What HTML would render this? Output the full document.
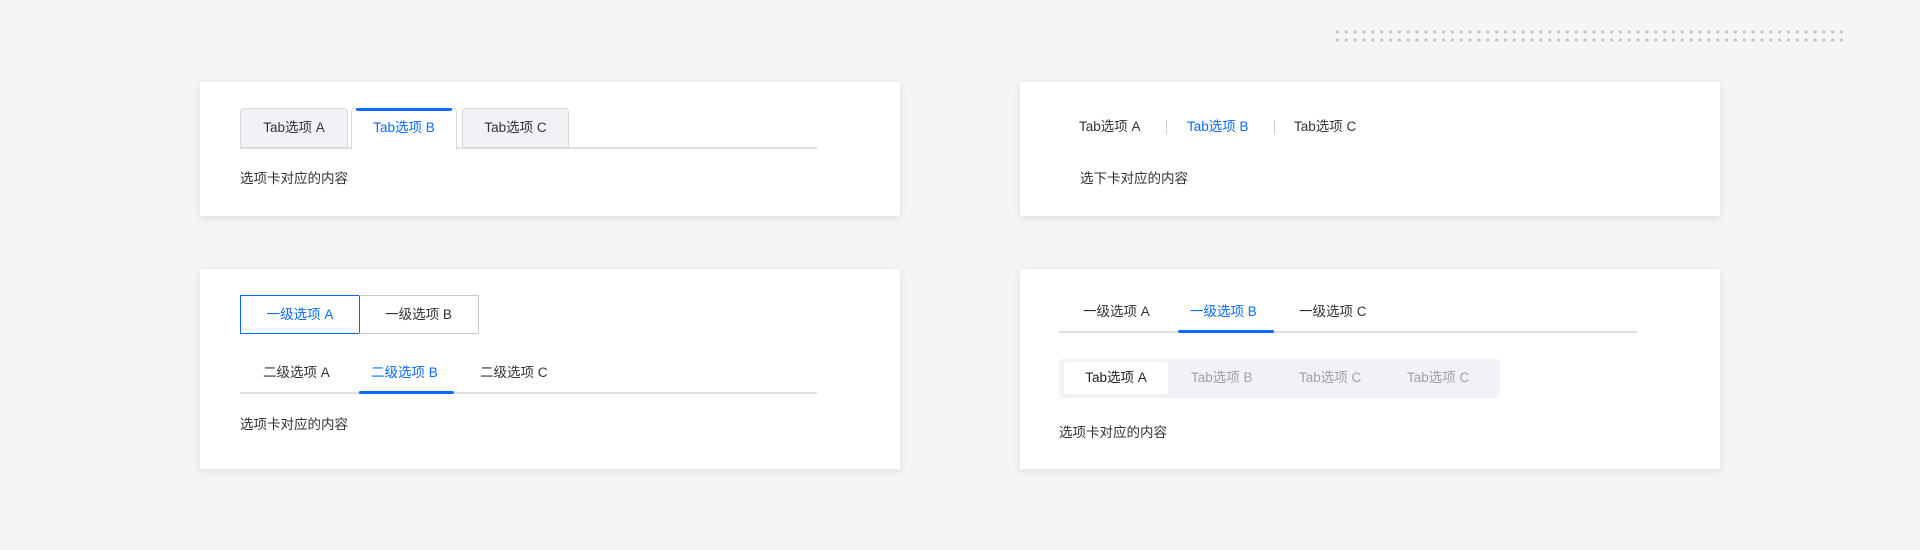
<!DOCTYPE html>
<html><head><meta charset="utf-8"><style>
*{margin:0;padding:0;box-sizing:border-box}
body{width:1920px;height:550px;background:#f5f5f5;position:relative;overflow:hidden;font-family:"Liberation Sans","Noto Sans CJK SC",sans-serif;font-size:13.5px;color:#333}
.card{position:absolute;background:#fff;box-shadow:0 2px 8px rgba(0,0,0,.1)}
.a{position:absolute;white-space:nowrap;line-height:20px}
.blue{color:#0a6cff}
.dots{position:absolute;left:1333px;top:28px;width:510px;height:16px;background-image:radial-gradient(circle,#c4c4c4 1.4px,transparent 1.8px);background-size:8.85px 8px}
</style></head><body>
<div class="dots"></div>

<div class="card" style="left:200px;top:82px;width:700px;height:134px">
  <div class="a" style="left:40px;top:65px;width:577px;height:2px;background:#dfdfe3"></div>
  <div class="a" style="left:40px;top:26px;width:108px;height:40px;background:#f1f2f5;border:1px solid #d8d9de;border-radius:4px 4px 0 0;text-align:center;line-height:38px">Tab选项 A</div>
  <div class="a blue" style="left:151px;top:26px;width:106px;height:42px;background:#fff;border:1px solid #d8d9de;border-bottom:none;border-radius:4px 4px 0 0;text-align:center;line-height:38px"><div style="position:absolute;left:4px;right:4px;top:-1px;height:3px;background:#0a6cff;border-radius:2px"></div>Tab选项 B</div>
  <div class="a" style="left:262px;top:26px;width:107px;height:40px;background:#f1f2f5;border:1px solid #d8d9de;border-radius:4px 4px 0 0;text-align:center;line-height:38px">Tab选项 C</div>
  <div class="a" style="left:40px;top:87px">选项卡对应的内容</div>
</div>

<div class="card" style="left:1020px;top:82px;width:700px;height:134px">
  <div class="a" style="left:59px;top:35px">Tab选项 A</div>
  <div class="a" style="left:146px;top:38px;width:1px;height:14px;background:#ccc"></div>
  <div class="a blue" style="left:167px;top:35px">Tab选项 B</div>
  <div class="a" style="left:254px;top:38px;width:1px;height:14px;background:#ccc"></div>
  <div class="a" style="left:274px;top:35px">Tab选项 C</div>
  <div class="a" style="left:60px;top:87px">选下卡对应的内容</div>
</div>

<div class="card" style="left:200px;top:269px;width:700px;height:200px">
  <div class="a blue" style="left:40px;top:26px;width:120px;height:39px;border:1px solid #0a6cff;text-align:center;line-height:37px">一级选项 A</div>
  <div class="a" style="left:159px;top:26px;width:120px;height:39px;border:1px solid #c8c9cf;border-left:none;text-align:center;line-height:37px">一级选项 B</div>
  <div class="a" style="left:63px;top:94px">二级选项 A</div>
  <div class="a blue" style="left:171px;top:94px">二级选项 B</div>
  <div class="a" style="left:280px;top:94px">二级选项 C</div>
  <div class="a" style="left:40px;top:123px;width:577px;height:2px;background:#dfdfe3"></div>
  <div class="a" style="left:159px;top:122px;width:95px;height:3px;background:#0a6cff;border-radius:2px"></div>
  <div class="a" style="left:40px;top:146px">选项卡对应的内容</div>
</div>

<div class="card" style="left:1020px;top:269px;width:700px;height:200px">
  <div class="a" style="left:63px;top:33px">一级选项 A</div>
  <div class="a blue" style="left:170px;top:33px">一级选项 B</div>
  <div class="a" style="left:279px;top:33px">一级选项 C</div>
  <div class="a" style="left:39px;top:62px;width:578px;height:2px;background:#dfdfe3"></div>
  <div class="a" style="left:158px;top:61px;width:96px;height:3px;background:#0a6cff;border-radius:2px"></div>
  <div class="a" style="left:39px;top:90px;width:441px;height:39px;background:#f1f2f5;border-radius:4px"></div>
  <div class="a" style="left:44px;top:93px;width:104px;height:32px;background:#fff;border-radius:3px;text-align:center;line-height:32px;color:#222">Tab选项 A</div>
  <div class="a" style="left:171px;top:99px;color:#a0a0a5">Tab选项 B</div>
  <div class="a" style="left:279px;top:99px;color:#a0a0a5">Tab选项 C</div>
  <div class="a" style="left:387px;top:99px;color:#a0a0a5">Tab选项 C</div>
  <div class="a" style="left:39px;top:154px">选项卡对应的内容</div>
</div>
</body></html>
